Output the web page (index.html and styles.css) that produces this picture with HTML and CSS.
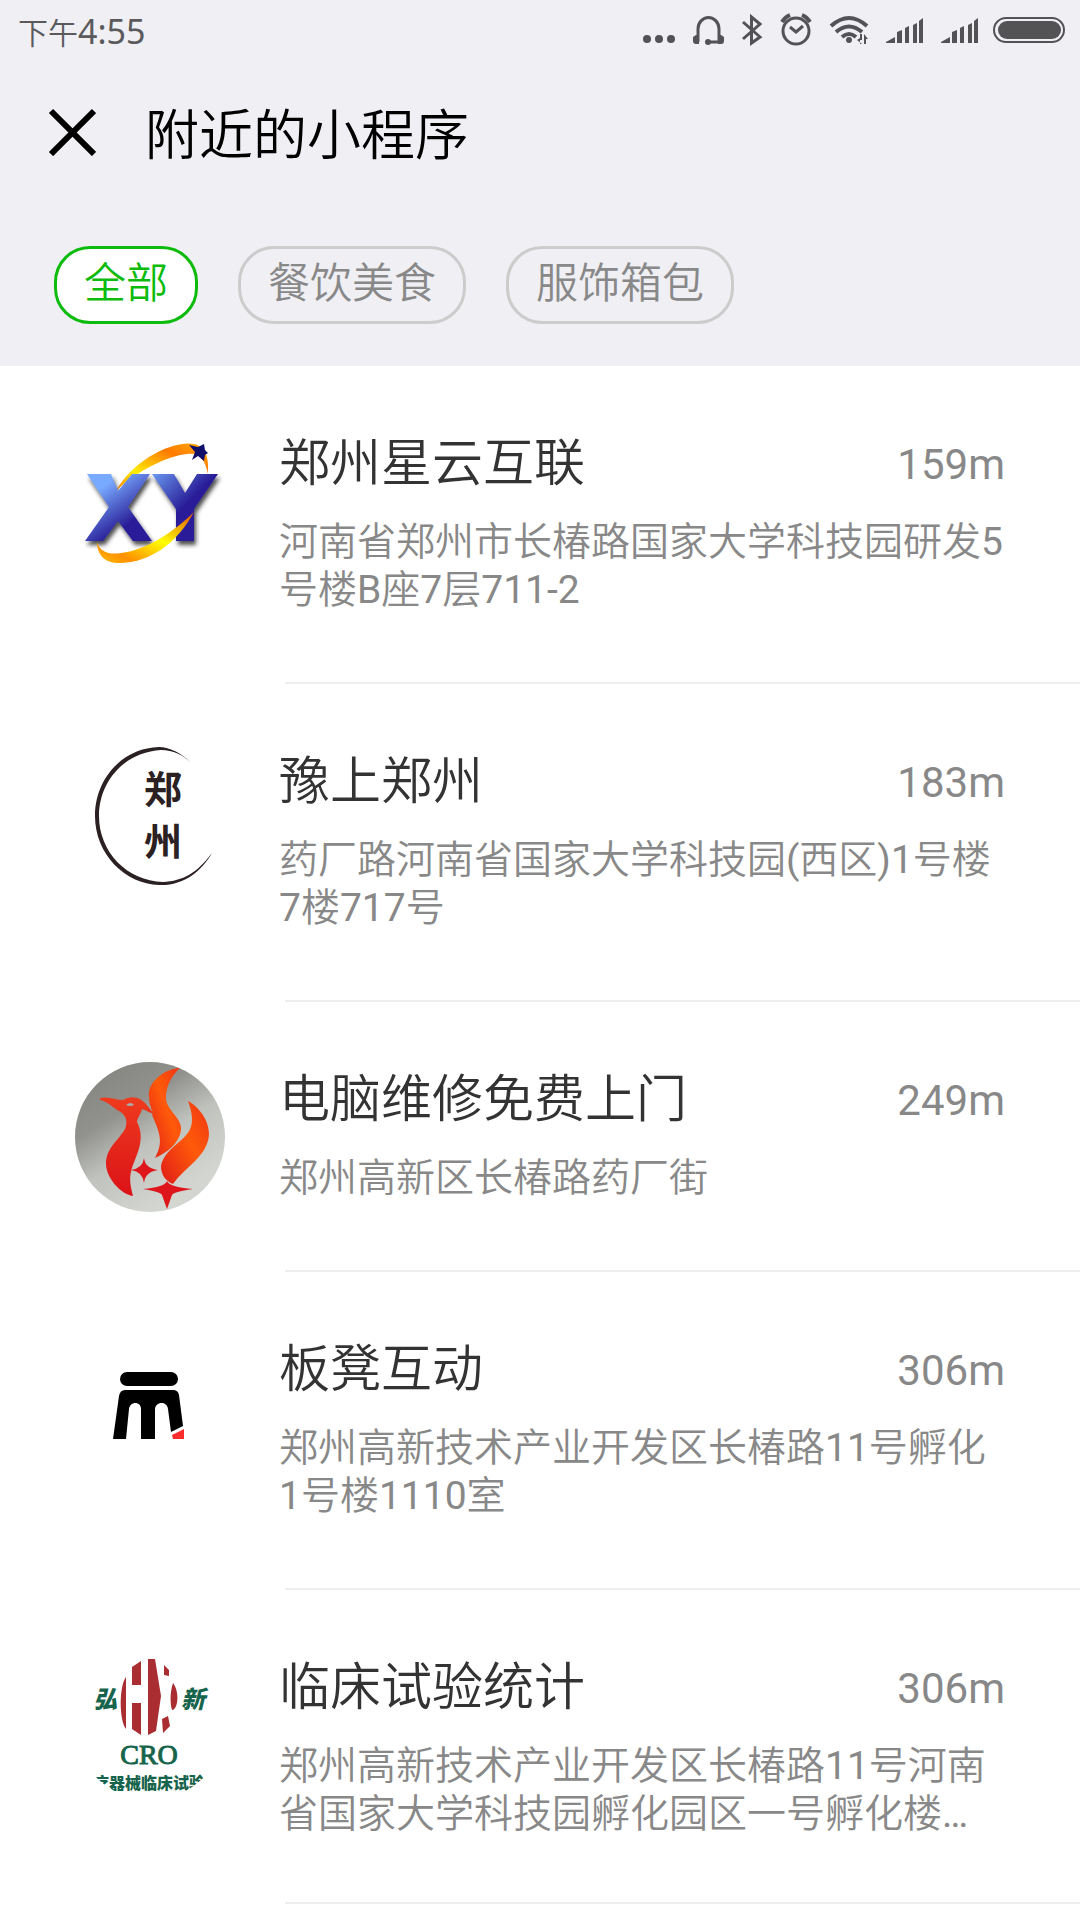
FILE: index.html
```html
<!DOCTYPE html>
<html lang="zh-CN">
<head>
<meta charset="utf-8">
<meta name="viewport" content="width=device-width, initial-scale=1">
<title>附近的小程序</title>
<link rel="stylesheet" href="styles.css">
</head>
<body>
<header class="top">
  <div class="status">
    <div class="clock">下午<span class="digits">4:55</span></div>
    <svg class="status-icons" width="430" height="40" viewBox="640 10 430 40" fill="#535356" stroke="none" aria-hidden="true">
      <circle cx="647" cy="39" r="4"/><circle cx="659" cy="39" r="4"/><circle cx="671" cy="39" r="4"/>
      <path d="M698 42V29a10.500 11.500 0 0 1 21 0V42H708" fill="none" stroke="#535356" stroke-width="3"/>
      <path d="M696 35h3v9h-3q-3 0-3-3v-4zM721 35h-3v9h3q3 0 3-3v-4z"/><circle cx="708" cy="42" r="3"/>
      <path d="M743 22l17 15-8.500 6V17l8.500 7-17 15" fill="none" stroke="#535356" stroke-width="3"/>
      <g fill="none" stroke="#535356" stroke-width="3"><circle cx="796" cy="31" r="13"/><path d="M790 27l6 5 7-6"/><path d="M782 22q3-5 8-7M810 22q-3-5-8-7" stroke-width="4"/></g>
      <g fill="none" stroke="#535356" stroke-width="4"><path d="M831 26q18-16 36 0"/><path d="M836 32q13-11 26 0"/><path d="M842 37q7-6 14 0"/></g>
      <circle cx="849" cy="40" r="3"/>
      <path d="M860 34h2v10h-2v-4h-3l3-2zM864 34l4 5h-2v5h-2zM857 40l5 4v-4z"/>
      <path d="M886 43v-1l9-5v6zM897 32l5-2v13h-5zM905 28l4-2v17h-4zM913 25l4-2v20h-4zM919 21l4-3v25h-4z"/>
      <path d="M941 43v-1l9-5v6zM952 32l5-2v13h-5zM960 28l4-2v17h-4zM968 25l4-2v20h-4zM974 21l4-3v25h-4z"/>
      <rect x="994" y="18" width="70" height="24" rx="12" fill="none" stroke="#535356" stroke-width="2"/><rect x="998" y="21" width="63" height="18" rx="9"/>
    </svg>
  </div>
  <div class="bar">
    <button class="close" aria-label="关闭"><svg width="48" height="48" viewBox="0 0 48 48" fill="none" stroke="#000" stroke-width="6"><path d="M3 3L46 46M46 3L3 46"/></svg></button>
    <h1>附近的小程序</h1>
  </div>
  <nav class="tabs">
    <button class="tab tab-on">全部</button>
    <button class="tab">餐饮美食</button>
    <button class="tab">服饰箱包</button>
  </nav>
</header>
<main>
  <ul class="list">
    <li class="item">
      <svg class="logo" viewBox="0 0 150 150" aria-hidden="true">
        <defs>
          <linearGradient id="bx" x1="0" y1="0" x2=".7" y2="1"><stop offset=".25" stop-color="#78aaff"/><stop offset=".8" stop-color="#2a1f98"/></linearGradient>
          <linearGradient id="by" x1="0" y1="0" x2=".6" y2=".6"><stop offset="0" stop-color="#6a97f0"/><stop offset=".8" stop-color="#2a1f98"/></linearGradient>
          <linearGradient id="o1" x1="0" y1="1" x2="1" y2="0"><stop offset="0" stop-color="#ff7a00"/><stop offset=".3" stop-color="#ffee00"/><stop offset=".7" stop-color="#ff7a00"/><stop offset="1" stop-color="#ffb000"/></linearGradient>
          <linearGradient id="o2" x1="0" y1="1" x2="1" y2="0"><stop offset="0" stop-color="#ffc000"/><stop offset=".2" stop-color="#ff9000"/><stop offset=".55" stop-color="#ffff00"/><stop offset="1" stop-color="#e05000"/></linearGradient>
          <filter id="sh" x="-20%" y="-20%" width="140%" height="150%"><feDropShadow dx="2" dy="4" stdDeviation="2" flood-color="#222" flood-opacity=".8"/></filter>
        </defs>
        <path d="M41 65C58 34 98 14 119 18C131 20 134 32 133 48C130 34 125 26 112 28C92 30 62 45 41 65z" fill="url(#o1)"/>
        <g filter="url(#sh)">
          <path d="M12 48H36L43 65 57 48H75L53 81 77 115H58L43 95 28 115H10L34 81z" fill="url(#bx)"/>
          <path d="M77 48H99L110 67 122 48H143L119 83V115H101V83z" fill="url(#by)"/>
        </g>
        <path d="M22 116C25 126 34 129 46 127C72 124 100 105 119 86C102 118 74 136 47 137C30 138 22 129 22 116z" fill="url(#o2)"/>
        <path d="M114 19l9 2 6-3 1 6 3 3-3 2-1 6-6-5-6 4 3-8z" fill="#10106a"/>
      </svg>
      <div class="info">
        <div class="line"><h2>郑州星云互联</h2><span class="dist">159m</span></div>
        <p>河南省郑州市长椿路国家大学科技园研发5号楼B座7层711-2</p>
      </div>
    </li>
    <li class="item">
      <svg class="logo" viewBox="0 0 150 150" aria-hidden="true">
        <path d="M116 19C104 6 90 3 84 3C48 4 20 34 20 72C20 110 50 140 84 141C108 142 126 128 137 109C122 129 108 137 88 138C52 137 24 108 24 72C24 37 50 8 86 6C98 6 108 11 116 19z" fill="#2b2022"/>
        <text class="seal" x="88" y="59">郑</text><text class="seal" x="88" y="111">州</text>
      </svg>
      <div class="info">
        <div class="line"><h2>豫上郑州</h2><span class="dist">183m</span></div>
        <p>药厂路河南省国家大学科技园(西区)1号楼7楼717号</p>
      </div>
    </li>
    <li class="item">
      <svg class="logo" viewBox="0 0 150 150" aria-hidden="true">
        <defs>
          <linearGradient id="gb" x1=".3" y1="0" x2=".8" y2=".8"><stop offset="0" stop-color="#868782"/><stop offset=".3" stop-color="#91928d"/><stop offset=".6" stop-color="#c0c2bd"/><stop offset="1" stop-color="#d3d5d0"/></linearGradient>
          <linearGradient id="rd" x1="0" y1="0" x2="0" y2="1"><stop offset="0" stop-color="#ee3b1d"/><stop offset="1" stop-color="#db1218"/></linearGradient>
          <linearGradient id="or" x1="1" y1="0" x2="0" y2="1"><stop offset="0" stop-color="#ee3413"/><stop offset=".45" stop-color="#ff5a0a"/><stop offset="1" stop-color="#e01c18"/></linearGradient>
        </defs>
        <circle cx="75" cy="75" r="75" fill="url(#gb)"/>
        <path d="M25 36C33 34 41 38 48 38C56 33 65 35 70 41L80 53C76 51 70 48 67 47C66 52 62 56 62 60C72 79 59 96 56 110C54 118 56 126 58 134C45 132 31 115 31 102C31 86 43 79 50 67C54 57 49 51 42 48C37 44 31 39 25 38z" fill="url(#rd)"/>
        <path d="M51 43q5-4 8 0q-4 2-8 0z" fill="#aaa"/>
        <path d="M105 6C88 7 72 21 74 35C74 45 80 52 77 53C86 73 88 81 80 96C94 90 106 79 106 66C106 56 93 49 91 38C90 25 97 13 105 6z" fill="url(#or)"/>
        <path d="M113 39C124 45 134 58 134 72C133 94 110 105 98 122C90 119 86 112 86 104C89 89 103 83 112 72C120 63 117 50 113 39z" fill="url(#or)"/>
        <path d="M69 96q1 10 14 12q-13 2-14 13q-1-11-13-13q12-2 13-12zM92 119q2 6 26 8q-20 3-21 6l-5 14-5-14q-1-3-19-6q22-2 24-8z" fill="#de151a"/>
      </svg>
      <div class="info">
        <div class="line"><h2>电脑维修免费上门</h2><span class="dist">249m</span></div>
        <p>郑州高新区长椿路药厂街</p>
      </div>
    </li>
    <li class="item">
      <svg class="logo" viewBox="0 0 150 150" aria-hidden="true">
        <rect x="45" y="40" width="58" height="14" rx="7"/>
        <path d="M50 58H98Q103 58 104 63L108 94 96 100 93 77C92 69 80 69 80 78V107H66V77C66 69 55 69 54 77L51 107H38L44 64Q45 58 50 58z"/>
        <path d="M97 103L109 97V107H98z" fill="#ff2c2c"/>
      </svg>
      <div class="info">
        <div class="line"><h2>板凳互动</h2><span class="dist">306m</span></div>
        <p>郑州高新技术产业开发区长椿路11号孵化1号楼1110室</p>
      </div>
    </li>
    <li class="item">
      <svg class="logo" viewBox="0 0 150 150" aria-hidden="true">
        <defs><clipPath id="cp"><circle cx="75" cy="75" r="75"/></clipPath></defs>
        <g fill="#a92d31">
          <path d="M51 27V79C44 70 44 36 51 27zM57 17L66 11V35H57zM57 53H66V85L57 79zM73 9L80 9 86 46 81 81 73 85zM89 15L94 20V26L89 25zM87 69L93 66 95 76 88 83zM98 33C105 42 103 60 97 60C95 53 95 42 98 33z"/>
        </g>
        <g fill="#17644c" clip-path="url(#cp)">
          <text class="brush" x="30" y="58">弘</text><text class="brush" x="118" y="58">新</text>
          <text class="cro" x="74" y="114">CRO</text>
          <text class="band" x="74" y="139">医疗器械临床试验网</text>
        </g>
      </svg>
      <div class="info">
        <div class="line"><h2>临床试验统计</h2><span class="dist">306m</span></div>
        <p>郑州高新技术产业开发区长椿路11号河南省国家大学科技园孵化园区一号孵化楼…</p>
      </div>
    </li>
  </ul>
</main>
</body>
</html>
```
FILE: styles.css
```css
* { box-sizing: border-box; }
body {
  margin: 0;
  background: #fff;
  color: #333;
  font-family: Roboto, "Noto Sans CJK SC DemiLight", "Noto Sans CJK SC", sans-serif;
  font-weight: 400;
}
h1, h2, p, ul { margin: 0; padding: 0; }
h1, h2 { font-family: "Noto Sans CJK SC", sans-serif; font-weight: 350; }
button { margin: 0; font: inherit; color: inherit; background: none; border: 0; cursor: pointer; }

.top { background: #efeff4; padding-bottom: 42px; }
.status {
  display: flex;
  justify-content: space-between;
  align-items: center;
  height: 60px;
  padding: 0 10px 0 18px;
  color: #5a5a5d;
}
.clock { padding-top: 4px; font-size: 30px; line-height: 56px; }
.digits { font-family: "Noto Sans", sans-serif; font-size: 34px; }
.bar { display: flex; align-items: center; height: 144px; padding: 0 48px; gap: 49px; }
.close { display: flex; padding: 0; }
h1 { font-size: 54px; line-height: 72px; color: #000; }
.tabs { display: flex; gap: 40px; padding: 42px 54px 0; }
.tab {
  height: 78px;
  padding: 0 27px 10px;
  border: 3px solid #ccc;
  border-radius: 36px;
  font-family: "Noto Sans CJK SC", sans-serif;
  font-weight: 350;
  font-size: 42px;
  line-height: 60px;
  color: #888;
}
.tab-on { border-color: #0cbb0b; background: #fff; color: #0cbb0b; }

.list { list-style: none; }
.item { display: flex; gap: 54px; padding: 60px 0 0 75px; }
.logo { flex: none; width: 150px; height: 150px; }
.info {
  flex: 1;
  padding: 0 75px 70px 0;
  background: linear-gradient(#eee, #eee) 6px bottom / 100% 2px no-repeat;
}
.item:last-child .info { padding-bottom: 66px; }
.line { display: flex; justify-content: space-between; align-items: flex-start; height: 76px; }
h2 { font-size: 51px; line-height: 66px; }
.dist { font-size: 42px; line-height: 78px; color: #888; }
.info p { margin-top: 16px; font-size: 39px; line-height: 48px; color: #888; }

.seal, .brush, .cro, .band { text-anchor: middle; }
.seal { font: 700 38px "Noto Sans CJK SC", sans-serif; fill: #2b2022; }
.brush { font: italic 900 24px "Noto Sans CJK SC", sans-serif; }
.cro { font: 28px "Liberation Serif", serif; stroke: #17644c; stroke-width: 1px; }
.band { font: 900 16px "Noto Sans CJK SC", sans-serif; }
```
